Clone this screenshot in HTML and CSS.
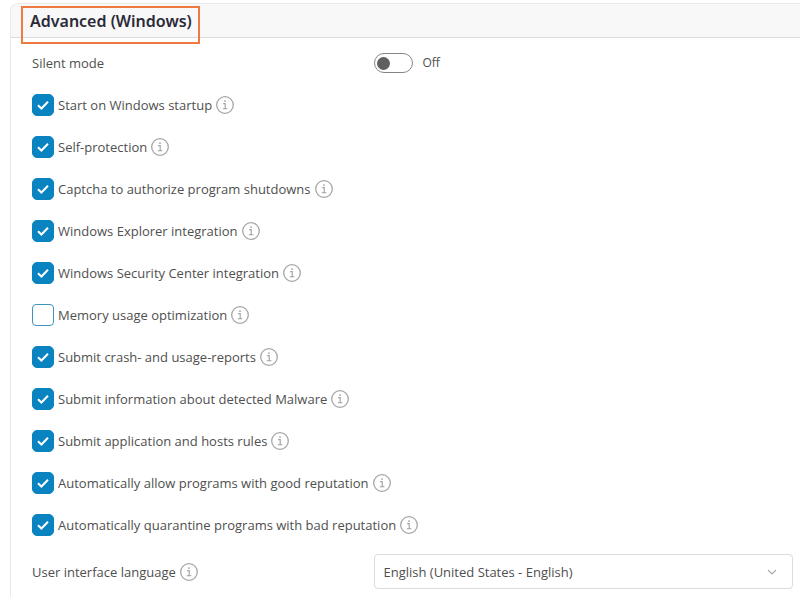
FILE: index.html
```html
<!DOCTYPE html>
<html lang="en">
<head>
  <meta charset="UTF-8">
  <meta name="viewport" content="width=device-width, initial-scale=1.0">
  <title>Advanced (Windows)</title>
  <link rel="stylesheet" href="styles.css">
</head>
<body>
  <!-- Shared icons -->
  <svg class="sprite" width="0" height="0" aria-hidden="true">
    <symbol id="info" viewBox="0 0 18 18">
      <circle cx="9" cy="9" r="8.3" fill="none" stroke="#a6a6a6" stroke-width="1.3"/>
      <path d="M7.2 7.6H9.2V12.6M6.8 12.7H11.4" fill="none" stroke="#a0a0a0" stroke-width="1.1"/>
      <circle cx="9" cy="5.1" r="0.9" fill="#a0a0a0"/>
    </symbol>
  </svg>

  <section class="card">
    <header class="card-header">
      <h2 class="card-title">Advanced (Windows)</h2>
    </header>

    <form class="card-body">
      <div class="row split">
        <label for="silent">Silent mode</label>
        <div class="switch-group">
          <input type="checkbox" class="switch" id="silent" role="switch">
          <span class="switch-text">Off</span>
        </div>
      </div>

      <!-- Options -->
      <div class="row">
        <input type="checkbox" class="check" id="startup" checked>
        <label for="startup">Start on Windows startup</label>
        <svg class="info"><use href="#info"/></svg>
      </div>
      <div class="row">
        <input type="checkbox" class="check" id="protection" checked>
        <label for="protection">Self-protection</label>
        <svg class="info"><use href="#info"/></svg>
      </div>
      <div class="row">
        <input type="checkbox" class="check" id="captcha" checked>
        <label for="captcha">Captcha to authorize program shutdowns</label>
        <svg class="info"><use href="#info"/></svg>
      </div>
      <div class="row">
        <input type="checkbox" class="check" id="explorer" checked>
        <label for="explorer">Windows Explorer integration</label>
        <svg class="info"><use href="#info"/></svg>
      </div>
      <div class="row">
        <input type="checkbox" class="check" id="security" checked>
        <label for="security">Windows Security Center integration</label>
        <svg class="info"><use href="#info"/></svg>
      </div>
      <div class="row">
        <input type="checkbox" class="check" id="memory">
        <label for="memory">Memory usage optimization</label>
        <svg class="info"><use href="#info"/></svg>
      </div>
      <div class="row">
        <input type="checkbox" class="check" id="reports" checked>
        <label for="reports">Submit crash- and usage-reports</label>
        <svg class="info"><use href="#info"/></svg>
      </div>
      <div class="row">
        <input type="checkbox" class="check" id="malware" checked>
        <label for="malware">Submit information about detected Malware</label>
        <svg class="info"><use href="#info"/></svg>
      </div>
      <div class="row">
        <input type="checkbox" class="check" id="rules" checked>
        <label for="rules">Submit application and hosts rules</label>
        <svg class="info"><use href="#info"/></svg>
      </div>
      <div class="row">
        <input type="checkbox" class="check" id="allow" checked>
        <label for="allow">Automatically allow programs with good reputation</label>
        <svg class="info"><use href="#info"/></svg>
      </div>
      <div class="row">
        <input type="checkbox" class="check" id="quarantine" checked>
        <label for="quarantine">Automatically quarantine programs with bad reputation</label>
        <svg class="info"><use href="#info"/></svg>
      </div>

      <div class="row split language">
        <div class="field-label">
          <label for="lang">User interface language</label>
          <svg class="info"><use href="#info"/></svg>
        </div>
        <select class="select" id="lang">
          <option>English (United States - English)</option>
        </select>
      </div>
    </form>
  </section>
</body>
</html>
```

FILE: styles.css
```css
* {
  box-sizing: border-box;
}

body {
  margin: 0;
  background: #fff;
  color: #4f4f4f;
  font-family: "Segoe UI", "Open Sans", sans-serif;
  font-size: 13px;
  line-height: 20px;
}

.sprite {
  position: absolute;
}

.card {
  margin: 3px 0 0 10px;
  border: 1px solid #e9e9e9;
  border-width: 1px 0 0 1px;
  border-radius: 8px 0 0 0;
}

.card-header {
  display: flex;
  padding: 2px 10px 0;
  height: 34px;
  background: #f8f8f8;
  border-bottom: 1px solid #dcdcdc;
  border-radius: 8px 0 0 0;
}

.card-title {
  position: relative;
  margin: 0;
  padding: 0 8px 0 9px;
  color: #2b2b38;
  font-family: "Segoe UI", "Noto Sans", sans-serif;
  font-size: 16px;
  font-weight: 600;
  line-height: 30px;
}

/* highlight frame, hangs over the header line */
.card-title::after {
  content: "";
  position: absolute;
  inset: 0 0 -7px;
  border: 2px solid #ee7a42;
}

.card-body {
  padding: 4px 7px 8px 21px;
}

.row {
  display: flex;
  align-items: center;
  gap: 4px;
  min-height: 42px;
}

.split {
  display: grid;
  grid-template-columns: 9fr 11fr;
  gap: 0;
}

.language {
  padding-top: 8px;
}

.field-label {
  display: flex;
  align-items: center;
  gap: 4px;
}

.info {
  flex: none;
  width: 18px;
  height: 18px;
}

.check {
  appearance: none;
  flex: none;
  width: 22px;
  height: 22px;
  margin: 0;
  border: 1px solid #3f93bd;
  border-radius: 4px;
  background: #fff;
}

.check:checked {
  border-color: #0a84c1;
  border-radius: 5px;
  background: #0a84c1 url("data:image/svg+xml,%3Csvg xmlns='http://www.w3.org/2000/svg' viewBox='0 0 20 20'%3E%3Cpath d='M5 10.2l3.4 3.3L15 6.8' fill='none' stroke='white' stroke-width='2'/%3E%3C/svg%3E") center / 20px no-repeat;
}

.switch-group {
  display: flex;
  align-items: center;
  gap: 9px;
}

.switch {
  appearance: none;
  display: flex;
  align-items: center;
  width: 39px;
  height: 20px;
  margin: 0;
  padding: 0 2px;
  border: 1px solid #858585;
  border-radius: 10px;
}

.switch::before {
  content: "";
  width: 13px;
  height: 13px;
  border-radius: 50%;
  background: #606060;
}

.switch:checked {
  justify-content: flex-end;
}

.switch-text {
  font-size: 12px;
}

.select {
  appearance: none;
  width: 100%;
  height: 35px;
  padding: 0 32px 0 8px;
  border: 1px solid #dcdcdc;
  border-radius: 4px;
  background: #fff url("data:image/svg+xml,%3Csvg xmlns='http://www.w3.org/2000/svg' viewBox='0 0 10 10'%3E%3Cpath d='M1 3l4 4 4-4' fill='none' stroke='%23aaa' stroke-width='1.2'/%3E%3C/svg%3E") right 15px center / 10px no-repeat;
  color: inherit;
  font: inherit;
}
```
